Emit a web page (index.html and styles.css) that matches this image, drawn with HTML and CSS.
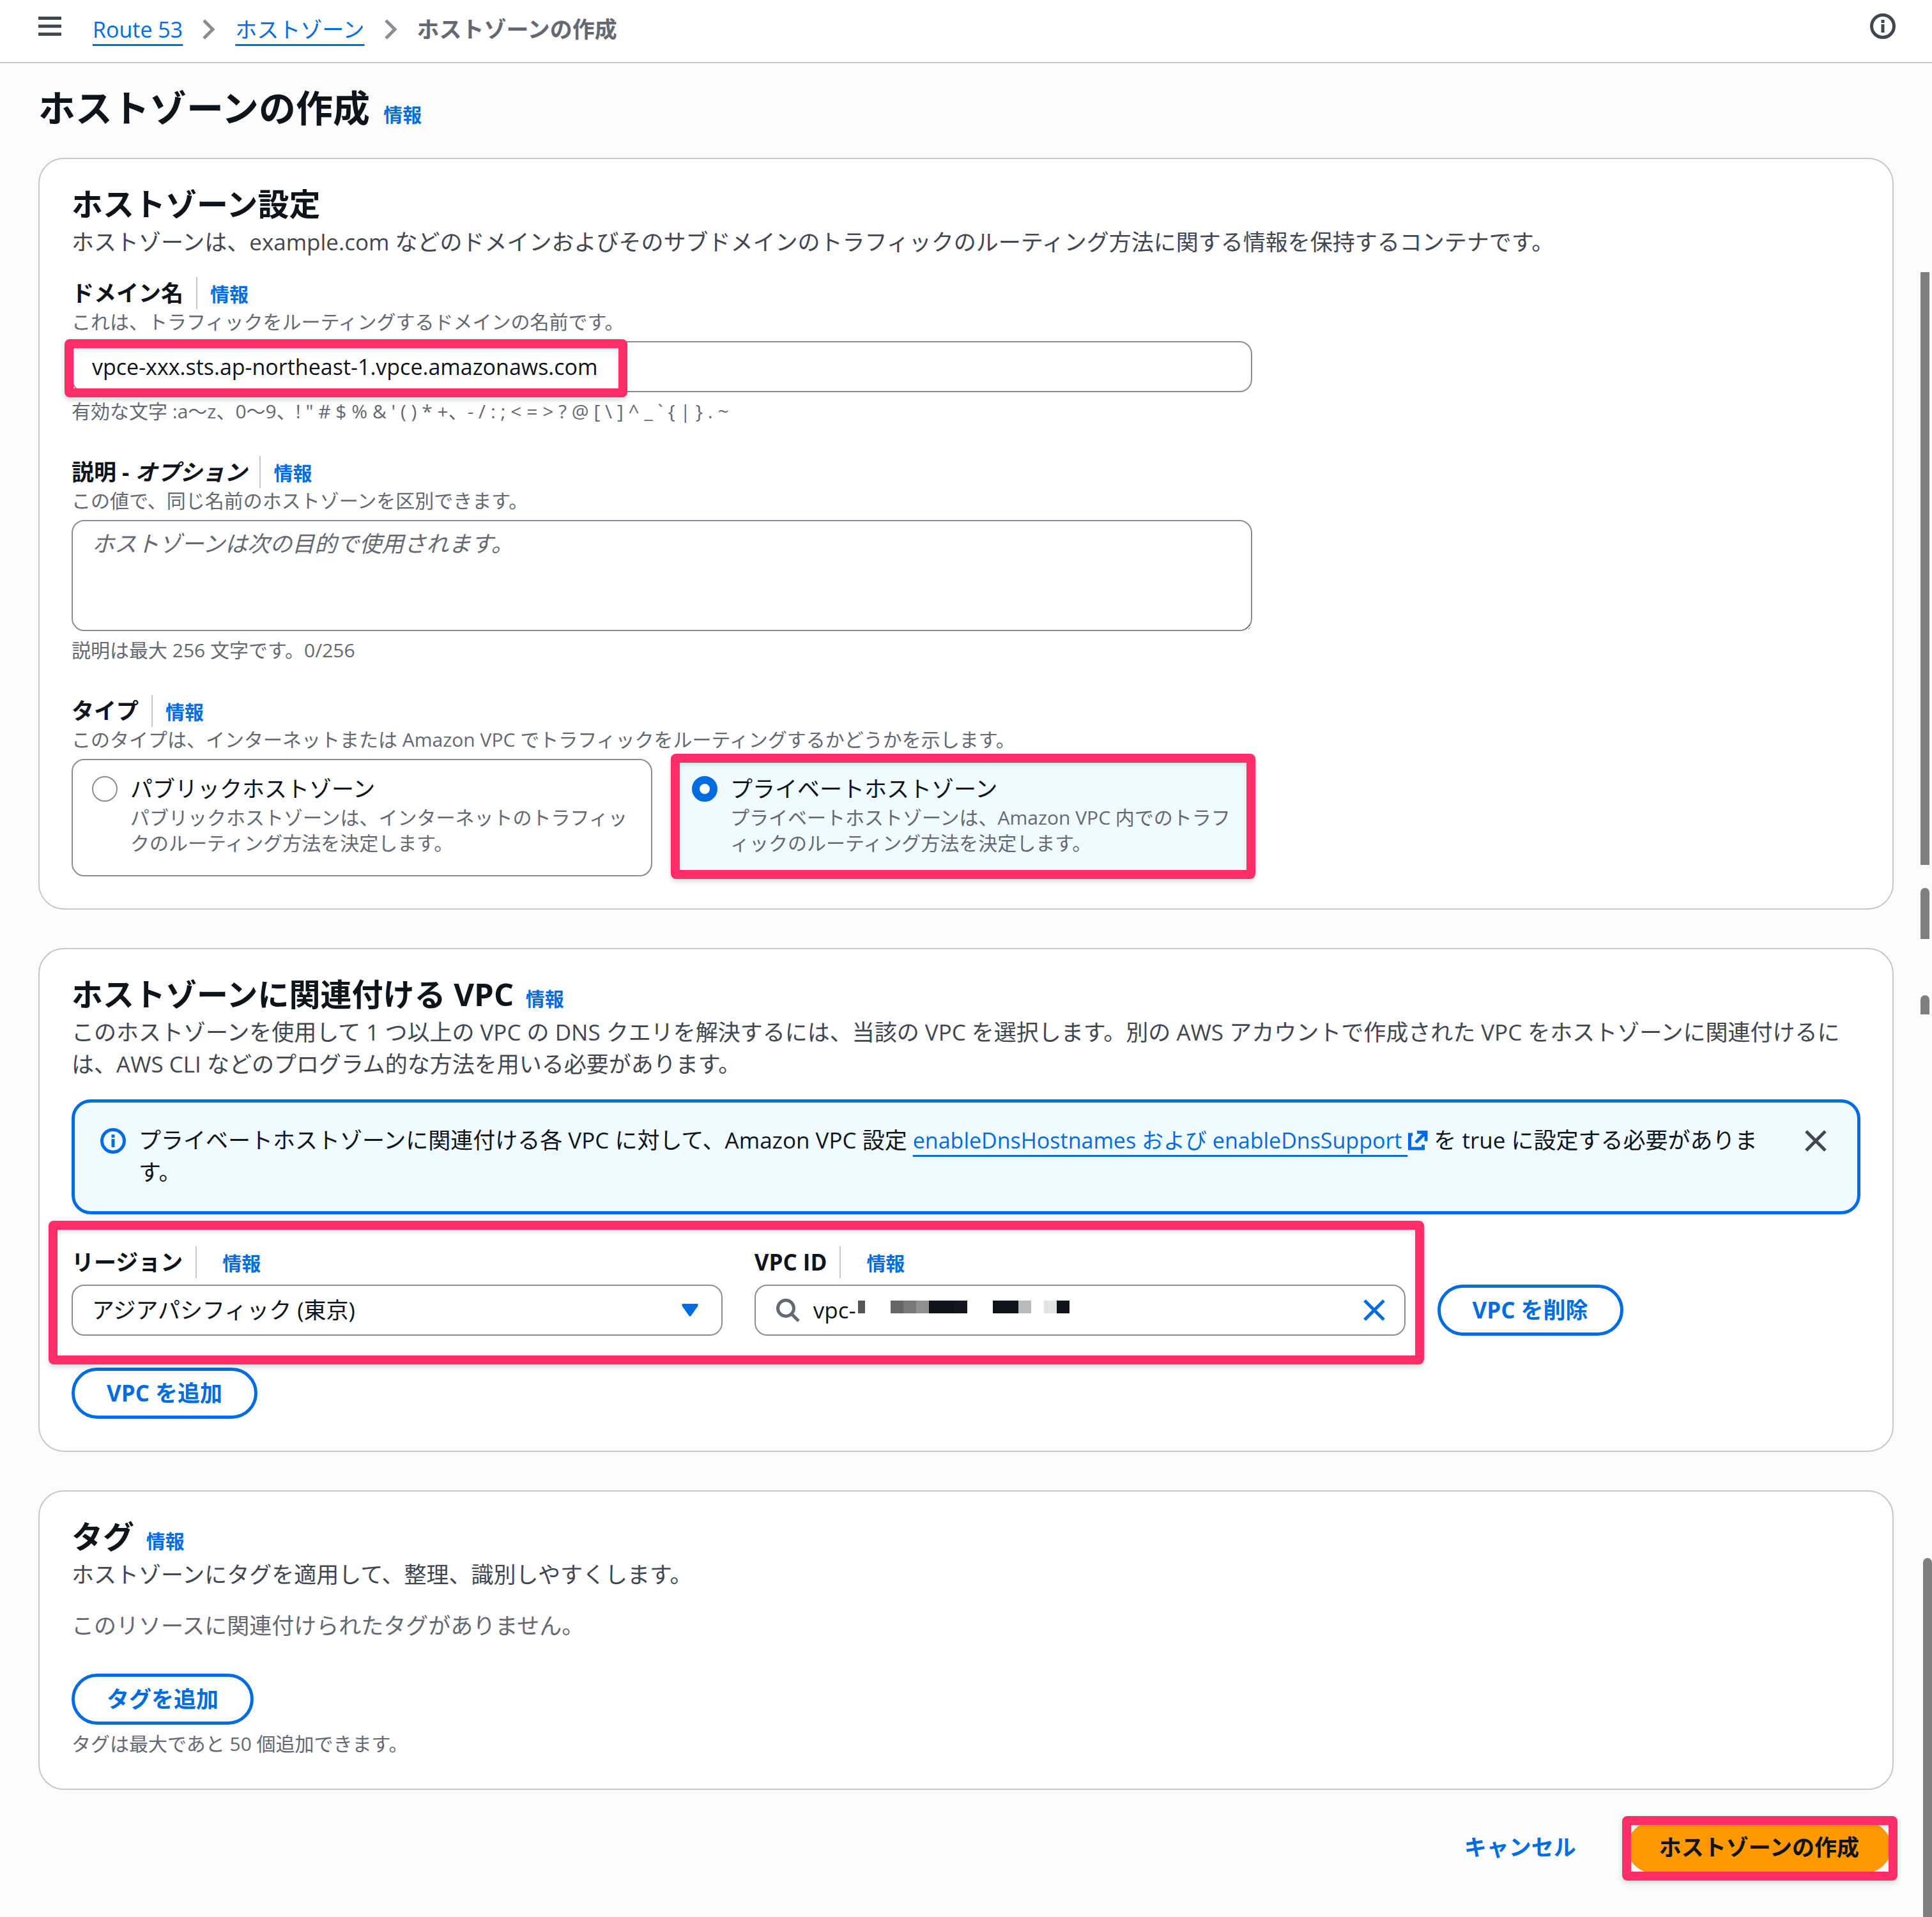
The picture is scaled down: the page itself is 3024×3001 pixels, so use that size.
FILE: index.html
```html
<!DOCTYPE html>
<html lang="ja">
<head>
    <meta charset="UTF-8" />
    <meta name="viewport" content="width=device-width, initial-scale=1.0" />
    <title>ホストゾーンの作成 | Route 53</title>
    <link rel="stylesheet" href="styles.css">
</head>
<body>
    <header class="topbar">
        <button type="button" class="icon-button menu" aria-label="メニュー">
            <svg width="36" height="30" viewBox="0 0 36 30"><path d="M0 2.5h36M0 15h36M0 27.5h36" stroke="#424650" stroke-width="5"/></svg>
        </button>
        <nav class="breadcrumb" aria-label="パンくずリスト">
            <a href="#">Route 53</a>
            <svg width="20" height="32" viewBox="0 0 20 32" aria-hidden="true"><path d="M2 2l14 14L2 30" fill="none" stroke="#8c8c94" stroke-width="5"/></svg>
            <a href="#">ホストゾーン</a>
            <svg width="20" height="32" viewBox="0 0 20 32" aria-hidden="true"><path d="M2 2l14 14L2 30" fill="none" stroke="#8c8c94" stroke-width="5"/></svg>
            <span class="current">ホストゾーンの作成</span>
        </nav>
        <button type="button" class="icon-button" aria-label="情報パネル">
            <svg width="40" height="40" viewBox="0 0 40 40"><circle cx="20" cy="20" r="17.5" fill="none" stroke="#424650" stroke-width="5"/><path d="M20 10v5M20 17v13" stroke="#424650" stroke-width="5"/></svg>
        </button>
    </header>

    <main>
        <h1>ホストゾーンの作成 <a href="#" class="info">情報</a></h1>

        <form>
            <section class="card">
                <h2>ホストゾーン設定</h2>
                <p class="description">ホストゾーンは、example.com などのドメインおよびそのサブドメインのトラフィックのルーティング方法に関する情報を保持するコンテナです。</p>

                <div class="fields">
                    <div class="field">
                        <div class="label-row">
                            <label for="domain">ドメイン名</label>
                            <a href="#" class="info">情報</a>
                        </div>
                        <p class="hint">これは、トラフィックをルーティングするドメインの名前です。</p>
                        <div class="control">
                            <input type="text" id="domain" class="box" value="vpce-xxx.sts.ap-northeast-1.vpce.amazonaws.com">
                            <div class="mark mark-domain"></div>
                        </div>
                        <p class="hint">有効な文字 :a〜z、0〜9、! " # $ % &amp; ' ( ) * +、- / : ; &lt; = &gt; ? @ [ \ ] ^ _ ` { | } . ~</p>
                    </div>

                    <div class="field">
                        <div class="label-row">
                            <label for="comment">説明 - <i>オプション</i></label>
                            <a href="#" class="info">情報</a>
                        </div>
                        <p class="hint">この値で、同じ名前のホストゾーンを区別できます。</p>
                        <div class="control">
                            <textarea id="comment" class="box" placeholder="ホストゾーンは次の目的で使用されます。"></textarea>
                        </div>
                        <p class="hint">説明は最大 256 文字です。0/256</p>
                    </div>

                    <div class="field" role="radiogroup" aria-labelledby="typeLabel">
                        <div class="label-row">
                            <span class="label" id="typeLabel">タイプ</span>
                            <a href="#" class="info">情報</a>
                        </div>
                        <p class="hint">このタイプは、インターネットまたは Amazon VPC でトラフィックをルーティングするかどうかを示します。</p>
                        <div class="tiles">
                            <label class="tile" for="public">
                                <input type="radio" id="public" name="type">
                                <span>
                                    <span class="tile-title">パブリックホストゾーン</span>
                                    <span class="hint">パブリックホストゾーンは、インターネットのトラフィックのルーティング方法を決定します。</span>
                                </span>
                            </label>
                            <label class="tile selected" for="private">
                                <input type="radio" id="private" name="type" checked>
                                <span>
                                    <span class="tile-title">プライベートホストゾーン</span>
                                    <span class="hint">プライベートホストゾーンは、Amazon VPC 内でのトラフィックのルーティング方法を決定します。</span>
                                </span>
                                <span class="mark mark-tile"></span>
                            </label>
                        </div>
                    </div>
                </div>
            </section>

            <section class="card">
                <h2>ホストゾーンに関連付ける VPC <a href="#" class="info">情報</a></h2>
                <p class="description">このホストゾーンを使用して 1 つ以上の VPC の DNS クエリを解決するには、当該の VPC を選択します。別の AWS アカウントで作成された VPC をホストゾーンに関連付けるには、AWS CLI などのプログラム的な方法を用いる必要があります。</p>

                <div class="alert">
                    <svg class="alert-icon" width="40" height="40" viewBox="0 0 40 40" aria-hidden="true"><circle cx="20" cy="20" r="17.5" fill="none" stroke="#006ce0" stroke-width="5"/><path d="M20 10v5M20 17v13" stroke="#006ce0" stroke-width="5"/></svg>
                    <p>プライベートホストゾーンに関連付ける各 VPC に対して、Amazon VPC 設定 <a href="#">enableDnsHostnames および enableDnsSupport </a><svg class="external" width="32" height="32" viewBox="0 0 32 32" aria-hidden="true"><path d="M8 7H3.500v22h21v-6M15 3.500h14v14M28 4.500L13 19.500" fill="none" stroke="#006ce0" stroke-width="5"/></svg> を true に設定する必要があります。</p>
                    <button type="button" class="icon-button" aria-label="閉じる">
                        <svg width="34" height="34" viewBox="0 0 34 34"><path d="M2 2l30 30M32 2L2 32" stroke="#424650" stroke-width="5"/></svg>
                    </button>
                </div>

                <div class="vpc-row">
                    <div class="vpc-field">
                        <div class="label-row wide">
                            <label for="region">リージョン</label>
                            <a href="#" class="info">情報</a>
                        </div>
                        <div class="control">
                            <select id="region" class="box">
                                <option>アジアパシフィック (東京)</option>
                            </select>
                            <svg class="caret" width="26" height="20" viewBox="0 0 26 20" aria-hidden="true"><path d="M2 0h22q3 1 1 4L14.500 19q-1.500 1.500-3 0L1 4Q-1 1 2 0z" fill="#006ce0"/></svg>
                        </div>
                    </div>
                    <div class="vpc-field">
                        <div class="label-row wide">
                            <label for="vpcId">VPC ID</label>
                            <a href="#" class="info">情報</a>
                        </div>
                        <div class="control box search">
                            <svg width="40" height="40" viewBox="0 0 40 40" aria-hidden="true"><circle cx="17" cy="17" r="12.500" fill="none" stroke="#656871" stroke-width="5"/><path d="M25 25l12 12" stroke="#656871" stroke-width="5"/></svg>
                            <input type="text" id="vpcId" value="vpc-">
                            <button type="button" class="icon-button" aria-label="クリア">
                                <svg width="34" height="34" viewBox="0 0 34 34"><path d="M2 2l30 30M32 2L2 32" stroke="#006ce0" stroke-width="5"/></svg>
                            </button>
                            <!-- masked part of the id -->
                            <svg class="mosaic" width="331" height="20" viewBox="0 0 331 20" shape-rendering="crispEdges" aria-hidden="true">
                                <rect x="0" width="11" height="20" fill="#55565a"/>
                                <rect x="51" width="20" height="20" fill="#666668"/>
                                <rect x="71" width="20" height="20" fill="#77787a"/>
                                <rect x="91" width="20" height="20" fill="#8e8f91"/>
                                <rect x="111" width="40" height="20" fill="#0f141a"/>
                                <rect x="151" width="20" height="20" fill="#14171f"/>
                                <rect x="211" width="40" height="20" fill="#0f141a"/>
                                <rect x="251" width="20" height="20" fill="#b9babc"/>
                                <rect x="291" width="20" height="20" fill="#e2e4e3"/>
                                <rect x="311" width="20" height="20" fill="#0f141a"/>
                            </svg>
                        </div>
                    </div>
                    <button type="button" class="btn">VPC を削除</button>
                    <div class="mark mark-vpc"></div>
                </div>

                <button type="button" class="btn">VPC を追加</button>
            </section>

            <section class="card">
                <h2>タグ <a href="#" class="info">情報</a></h2>
                <p class="description">ホストゾーンにタグを適用して、整理、識別しやすくします。</p>
                <p class="empty">このリソースに関連付けられたタグがありません。</p>
                <button type="button" class="btn">タグを追加</button>
                <p class="hint below">タグは最大であと 50 個追加できます。</p>
            </section>

            <div class="actions">
                <button type="button" class="btn link">キャンセル</button>
                <div class="submit">
                    <button type="submit" class="btn primary">ホストゾーンの作成</button>
                    <div class="mark mark-submit"></div>
                </div>
            </div>
        </form>
    </main>

    <div class="thumb thumb-1"></div>
    <div class="thumb thumb-2"></div>
    <div class="thumb thumb-3"></div>
    <div class="thumb thumb-4"></div>
</body>
</html>
```
FILE: styles.css
```css
* {
    box-sizing: border-box;
}

body {
    position: relative;
    margin: 0;
    min-height: 100vh;
    background-color: #fcfcfd;
    color: #0f141a;
    font-family: "Open Sans", "Noto Sans CJK JP", sans-serif;
    font-size: 35px;
    line-height: 50px;
}

h1, h2, p {
    margin: 0;
}

a {
    color: #006ce0;
    text-decoration: none;
}

svg {
    display: block;
    flex-shrink: 0;
}

input, textarea, select, button {
    font: inherit;
    color: inherit;
}

.icon-button {
    border: none;
    background: none;
    padding: 0;
    cursor: pointer;
}

/* top bar */
.topbar {
    display: flex;
    align-items: flex-start;
    height: 99px;
    padding: 21px 57px 0 60px;
    background-color: #ffffff;
    border-bottom: 2px solid #c6c6cd;
}

.menu {
    padding-top: 5px;
}

.breadcrumb {
    flex: 1;
    display: flex;
    align-items: center;
    gap: 31px;
    padding-left: 49px;
}

.breadcrumb a,
.alert a {
    font-size: 34px;
    text-decoration: underline;
    text-decoration-thickness: 3px;
    text-underline-offset: 10px;
}

.breadcrumb .current {
    color: #656871;
    font-weight: 700;
}

/* headings */
main {
    padding: 32px 60px 69px;
}

h1 {
    font-size: 58px;
    line-height: 76px;
    margin-bottom: 40px;
}

h2 {
    font-size: 49px;
    line-height: 60px;
}

.info {
    font-size: 30px;
    line-height: 40px;
    font-weight: 700;
}

h1 .info,
h2 .info {
    margin-left: 6px;
}

/* containers */
.card {
    padding: 40px 50px 50px;
    margin-bottom: 60px;
    background-color: #ffffff;
    border: 2px solid #c6c6cd;
    border-radius: 40px;
}

.description {
    margin: 5px 0 30px;
    color: #424650;
}

.hint {
    color: #656871;
    font-size: 30px;
    line-height: 40px;
}

.fields {
    display: flex;
    flex-direction: column;
    gap: 50px;
    width: 66%;
}

.label-row {
    display: flex;
    align-items: baseline;
    gap: 20px;
}

.label-row.wide {
    gap: 40px;
}

.label-row label,
.label-row .label {
    padding-right: 20px;
    border-right: 2px solid #c6c6cd;
    font-weight: 700;
}

.control {
    position: relative;
    margin: 10px 0;
}

.box {
    display: block;
    width: 100%;
    height: 80px;
    padding: 0 30px;
    background-color: #ffffff;
    border: 2px solid #8c8c94;
    border-radius: 20px;
    outline: none;
}

input.box {
    font-size: 34px;
}

textarea.box {
    height: 174px;
    padding: 10px 30px;
    resize: vertical;
}

textarea::placeholder {
    color: #656871;
    font-style: italic;
    opacity: 1;
}

select.box {
    appearance: none;
}

.caret {
    position: absolute;
    right: 38px;
    top: 30px;
}

/* type tiles */
.tiles {
    display: grid;
    grid-template-columns: 1fr 1fr;
    gap: 30px;
    margin-top: 10px;
}

.tile {
    position: relative;
    display: flex;
    gap: 20px;
    padding: 20px 30px 30px;
    border: 2px solid #8c8c94;
    border-radius: 20px;
}

.tile.selected {
    background-color: #f0fbff;
    border-color: #006ce0;
}

.tile input {
    appearance: none;
    flex-shrink: 0;
    width: 40px;
    height: 40px;
    margin: 5px 0 0;
    border: 2px solid #8c8c94;
    border-radius: 50%;
    background-color: #ffffff;
}

.tile input:checked {
    border: 12px solid #006ce0;
}

.tile-title,
.tile .hint {
    display: block;
}

/* info alert */
.alert {
    display: flex;
    align-items: flex-start;
    padding: 34px 48px 36px 40px;
    margin-bottom: 50px;
    background-color: #f0fbff;
    border: 5px solid #006ce0;
    border-radius: 30px;
}

.alert-icon {
    margin-top: 6px;
}

.alert p {
    flex: 1;
    margin: 0 50px 0 20px;
}

.alert .icon-button {
    padding-top: 9px;
}

.external {
    display: inline-block;
    vertical-align: -3px;
}

/* vpc row */
.vpc-row {
    position: relative;
    display: grid;
    grid-template-columns: repeat(8, 1fr);
    column-gap: 50px;
    align-items: end;
    margin-bottom: 50px;
}

.vpc-field {
    grid-column: span 3;
}

.vpc-row .btn {
    grid-column: span 2;
    justify-self: start;
}

.vpc-row .control {
    margin-bottom: 0;
}

.search {
    display: flex;
    align-items: center;
    gap: 20px;
}

.search input {
    flex: 1;
    min-width: 0;
    padding: 0;
    border: none;
    outline: none;
}

.mosaic {
    position: absolute;
    left: 160px;
    top: 23px;
}

/* buttons */
.btn {
    height: 80px;
    padding: 0 50px;
    background-color: #ffffff;
    color: #006ce0;
    border: 5px solid #006ce0;
    border-radius: 40px;
    font-weight: 700;
    white-space: nowrap;
    cursor: pointer;
}

.btn.link {
    background: none;
    border-color: transparent;
}

.btn.primary {
    background-color: #ff9900;
    border-color: #ff9900;
    color: #0f141a;
    padding: 0 45px;
}

.empty {
    color: #656871;
    margin-bottom: 50px;
}

.below {
    margin-top: 10px;
}

.actions {
    display: flex;
    justify-content: flex-end;
    gap: 25px;
    margin-top: -10px;
    padding-right: 4px;
}

.submit {
    position: relative;
}

/* highlight frames drawn over the form */
.mark {
    position: absolute;
    border: 14px solid #ff2e69;
    border-radius: 8px;
    box-shadow: 0 4px 8px rgba(0, 0, 0, 0.15), inset 0 4px 6px rgba(0, 0, 0, 0.1);
    pointer-events: none;
}

.mark-domain {
    left: -11px;
    top: -3px;
    width: 881px;
    height: 91px;
}

.mark-tile {
    inset: -10px -7px -6px -3px;
}

.mark-vpc {
    left: -36px;
    top: -40px;
    width: 2153px;
    height: 225px;
}

.mark-submit {
    inset: -9px -10px -12px -8px;
}

/* scrollbar thumbs */
.thumb {
    position: absolute;
    right: 4px;
    width: 14px;
    background-color: #7f7f7f;
}

.thumb-1 {
    top: 426px;
    height: 928px;
}

.thumb-2 {
    top: 1390px;
    height: 80px;
    border-radius: 7px 7px 0 0;
}

.thumb-3 {
    top: 1558px;
    height: 30px;
    border-radius: 7px 7px 0 0;
}

.thumb-4 {
    top: 2439px;
    right: 0;
    bottom: 0;
    border-radius: 7px 7px 0 0;
}
```
